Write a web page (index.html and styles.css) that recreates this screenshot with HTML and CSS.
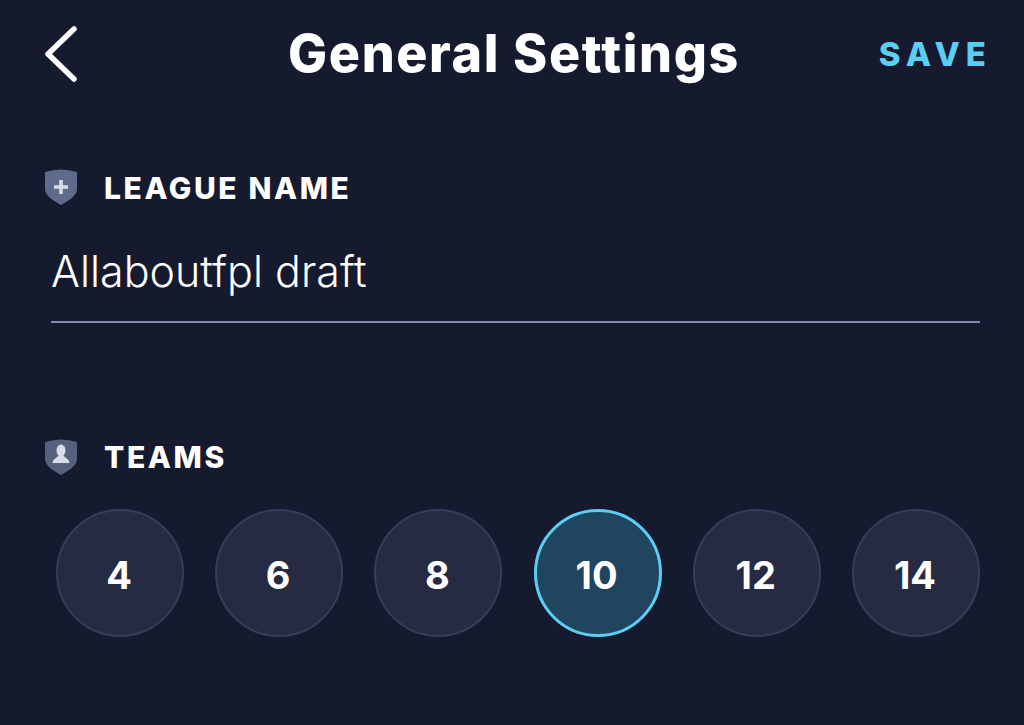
FILE: index.html
```html
<!DOCTYPE html>
<html lang="en">

<head>
    <meta charset="UTF-8">
    <meta name="viewport" content="width=device-width, initial-scale=1.0">
    <title>General Settings</title>
    <link rel="stylesheet" href="styles.css">
</head>

<body>
    <header class="top_bar">
        <svg class="back_icon" width="34" height="56" viewBox="0 0 34 56">
            <path d="M30 3 L4 28 L30 53" fill="none" stroke="#fff" stroke-width="5.500" stroke-linecap="round" stroke-linejoin="round" />
        </svg>
        <h1>General Settings</h1>
        <span class="save">SAVE</span>
    </header>

    <section class="league">
        <div class="field_label">
            <svg width="34" height="38" viewBox="0 0 34 38">
                <path d="M1 4 Q9 1.500 17 1.500 Q25 1.500 33 4 V21 C33 28 24 33 17 37 C10 33 1 28 1 21 Z" fill="#5f6b8a" />
                <path d="M15.200 12 h3.600 v5.200 h5.200 v3.600 h-5.200 v5.200 h-3.600 v-5.200 h-5.200 v-3.600 h5.200 Z" fill="#d8dce6" />
            </svg>
            <span>LEAGUE NAME</span>
        </div>
        <div class="name_input">Allaboutfpl draft</div>
    </section>

    <section class="teams">
        <div class="field_label">
            <svg width="34" height="38" viewBox="0 0 34 38">
                <path d="M1 4 Q9 1.500 17 1.500 Q25 1.500 33 4 V21 C33 28 24 33 17 37 C10 33 1 28 1 21 Z" fill="#56617d" />
                <ellipse cx="17" cy="12.500" rx="4.500" ry="6" fill="#d8dce6" />
                <path d="M8.500 25 C8.500 21 13 20 15 17 H19 C21 20 25.500 21 25.500 25 Z" fill="#d8dce6" />
            </svg>
            <span>TEAMS</span>
        </div>
        <div class="team_row">
            <div class="team_btn">4</div>
            <div class="team_btn">6</div>
            <div class="team_btn">8</div>
            <div class="team_btn active">10</div>
            <div class="team_btn">12</div>
            <div class="team_btn">14</div>
        </div>
    </section>
</body>

</html>
```

FILE: styles.css
```css
body{margin: 0; background: #151a2e; color: #fff; font-family: "Inter", sans-serif; height: 725px; overflow: hidden;}

.top_bar{display: grid; grid-template-columns: 1fr auto 1fr; align-items: center; padding: 26px 32px 0px 44px; height: 56px; line-height: 56px;}
.top_bar h1{margin: 0px 8px 0px 0px; font-size: 52px; font-weight: 800; letter-spacing: 1.600px;}
.save{justify-self: end; font-size: 33px; font-weight: 800; letter-spacing: 6px; color: #5ccdf3;}

.league{padding: 0px 44px; margin-top: 86px;}
.field_label{display: flex; align-items: center; gap: 26px; font-size: 30px; font-weight: 800; letter-spacing: 2.600px; height: 38px;}
.league .field_label span{padding-top: 2px;}

.name_input{margin: 40px 0px 0px 7px; padding: 0px 0px 25px; width: 929px; border-bottom: 2px solid #7e89ab; font-size: 43px; font-weight: 300; line-height: 50px;}

.teams{padding: 0px 44px; margin-top: 115px;}

.team_row{display: flex; justify-content: space-between; width: 924px; margin: 33px 0px 0px 12px;}
.team_btn{width: 128px; height: 128px; padding: 3px 2px 0px 0px; box-sizing: border-box; border-radius: 50%; border: 2px solid #383c58; background: #272a43; display: flex; align-items: center; justify-content: center; font-size: 38px; font-weight: 700;}
.team_btn.active{background: #20465f; border: 3px solid #5ccdf3;}
```
